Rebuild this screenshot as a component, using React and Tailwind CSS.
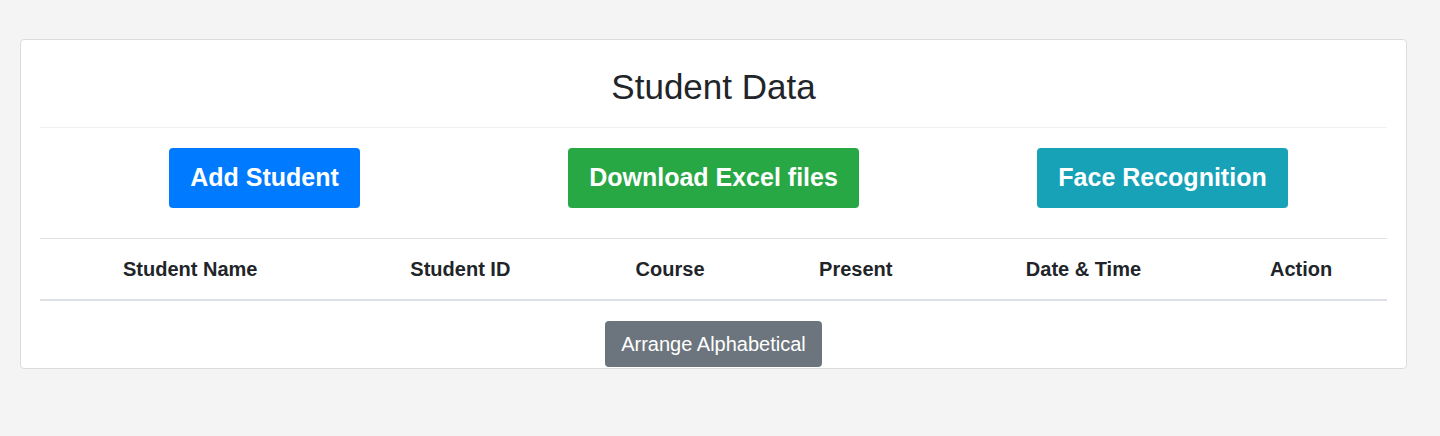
import React from 'react';

const columns = [
  { label: 'Student Name', w: 'w-[301px]' },
  { label: 'Student ID', w: 'w-[240px]' },
  { label: 'Course', w: 'w-[180px]' },
  { label: 'Present', w: 'w-[192px]' },
  { label: 'Date & Time', w: 'w-[264px]' },
  { label: 'Action', w: 'w-[172px]' },
];

export default function App() {
  return (
    <div className="min-h-[436px] bg-[#f4f4f4] pt-[39px] px-[20px] font-['Liberation_Sans',Arial,sans-serif] text-[#212529]">
      <div className="w-[1387px] h-[330px] bg-white border border-[#dcdcdc] rounded-[4px] px-[19px]">
        <h1 className="text-center text-[35px] leading-[38px] pt-[28px] pb-[21px] border-b border-[#f2f2f2]">
          Student Data
        </h1>
        <div className="grid grid-cols-3 pt-[20px] pb-[30px] border-b border-[#dee2e6]">
          <div className="flex justify-center">
            <button className="h-[60px] px-[21px] rounded-[4px] bg-[#007bff] text-white font-bold text-[25px]">
              Add Student
            </button>
          </div>
          <div className="flex justify-center">
            <button className="h-[60px] px-[21px] rounded-[4px] bg-[#28a745] text-white font-bold text-[25px]">
              Download Excel files
            </button>
          </div>
          <div className="flex justify-center">
            <button className="h-[60px] px-[21px] rounded-[4px] bg-[#17a2b8] text-white font-bold text-[25px]">
              Face Recognition
            </button>
          </div>
        </div>
        <div className="flex h-[62px] items-center border-b-2 border-[#dee2e6]">
          {columns.map((c) => (
            <div key={c.label} className={`${c.w} text-center font-bold text-[20px]`}>
              {c.label}
            </div>
          ))}
        </div>
        <div className="flex justify-center pt-[20px]">
          <button className="h-[46px] px-[16px] rounded-[4px] bg-[#6c757d] text-white text-[20px]">
            Arrange Alphabetical
          </button>
        </div>
      </div>
    </div>
  );
}
